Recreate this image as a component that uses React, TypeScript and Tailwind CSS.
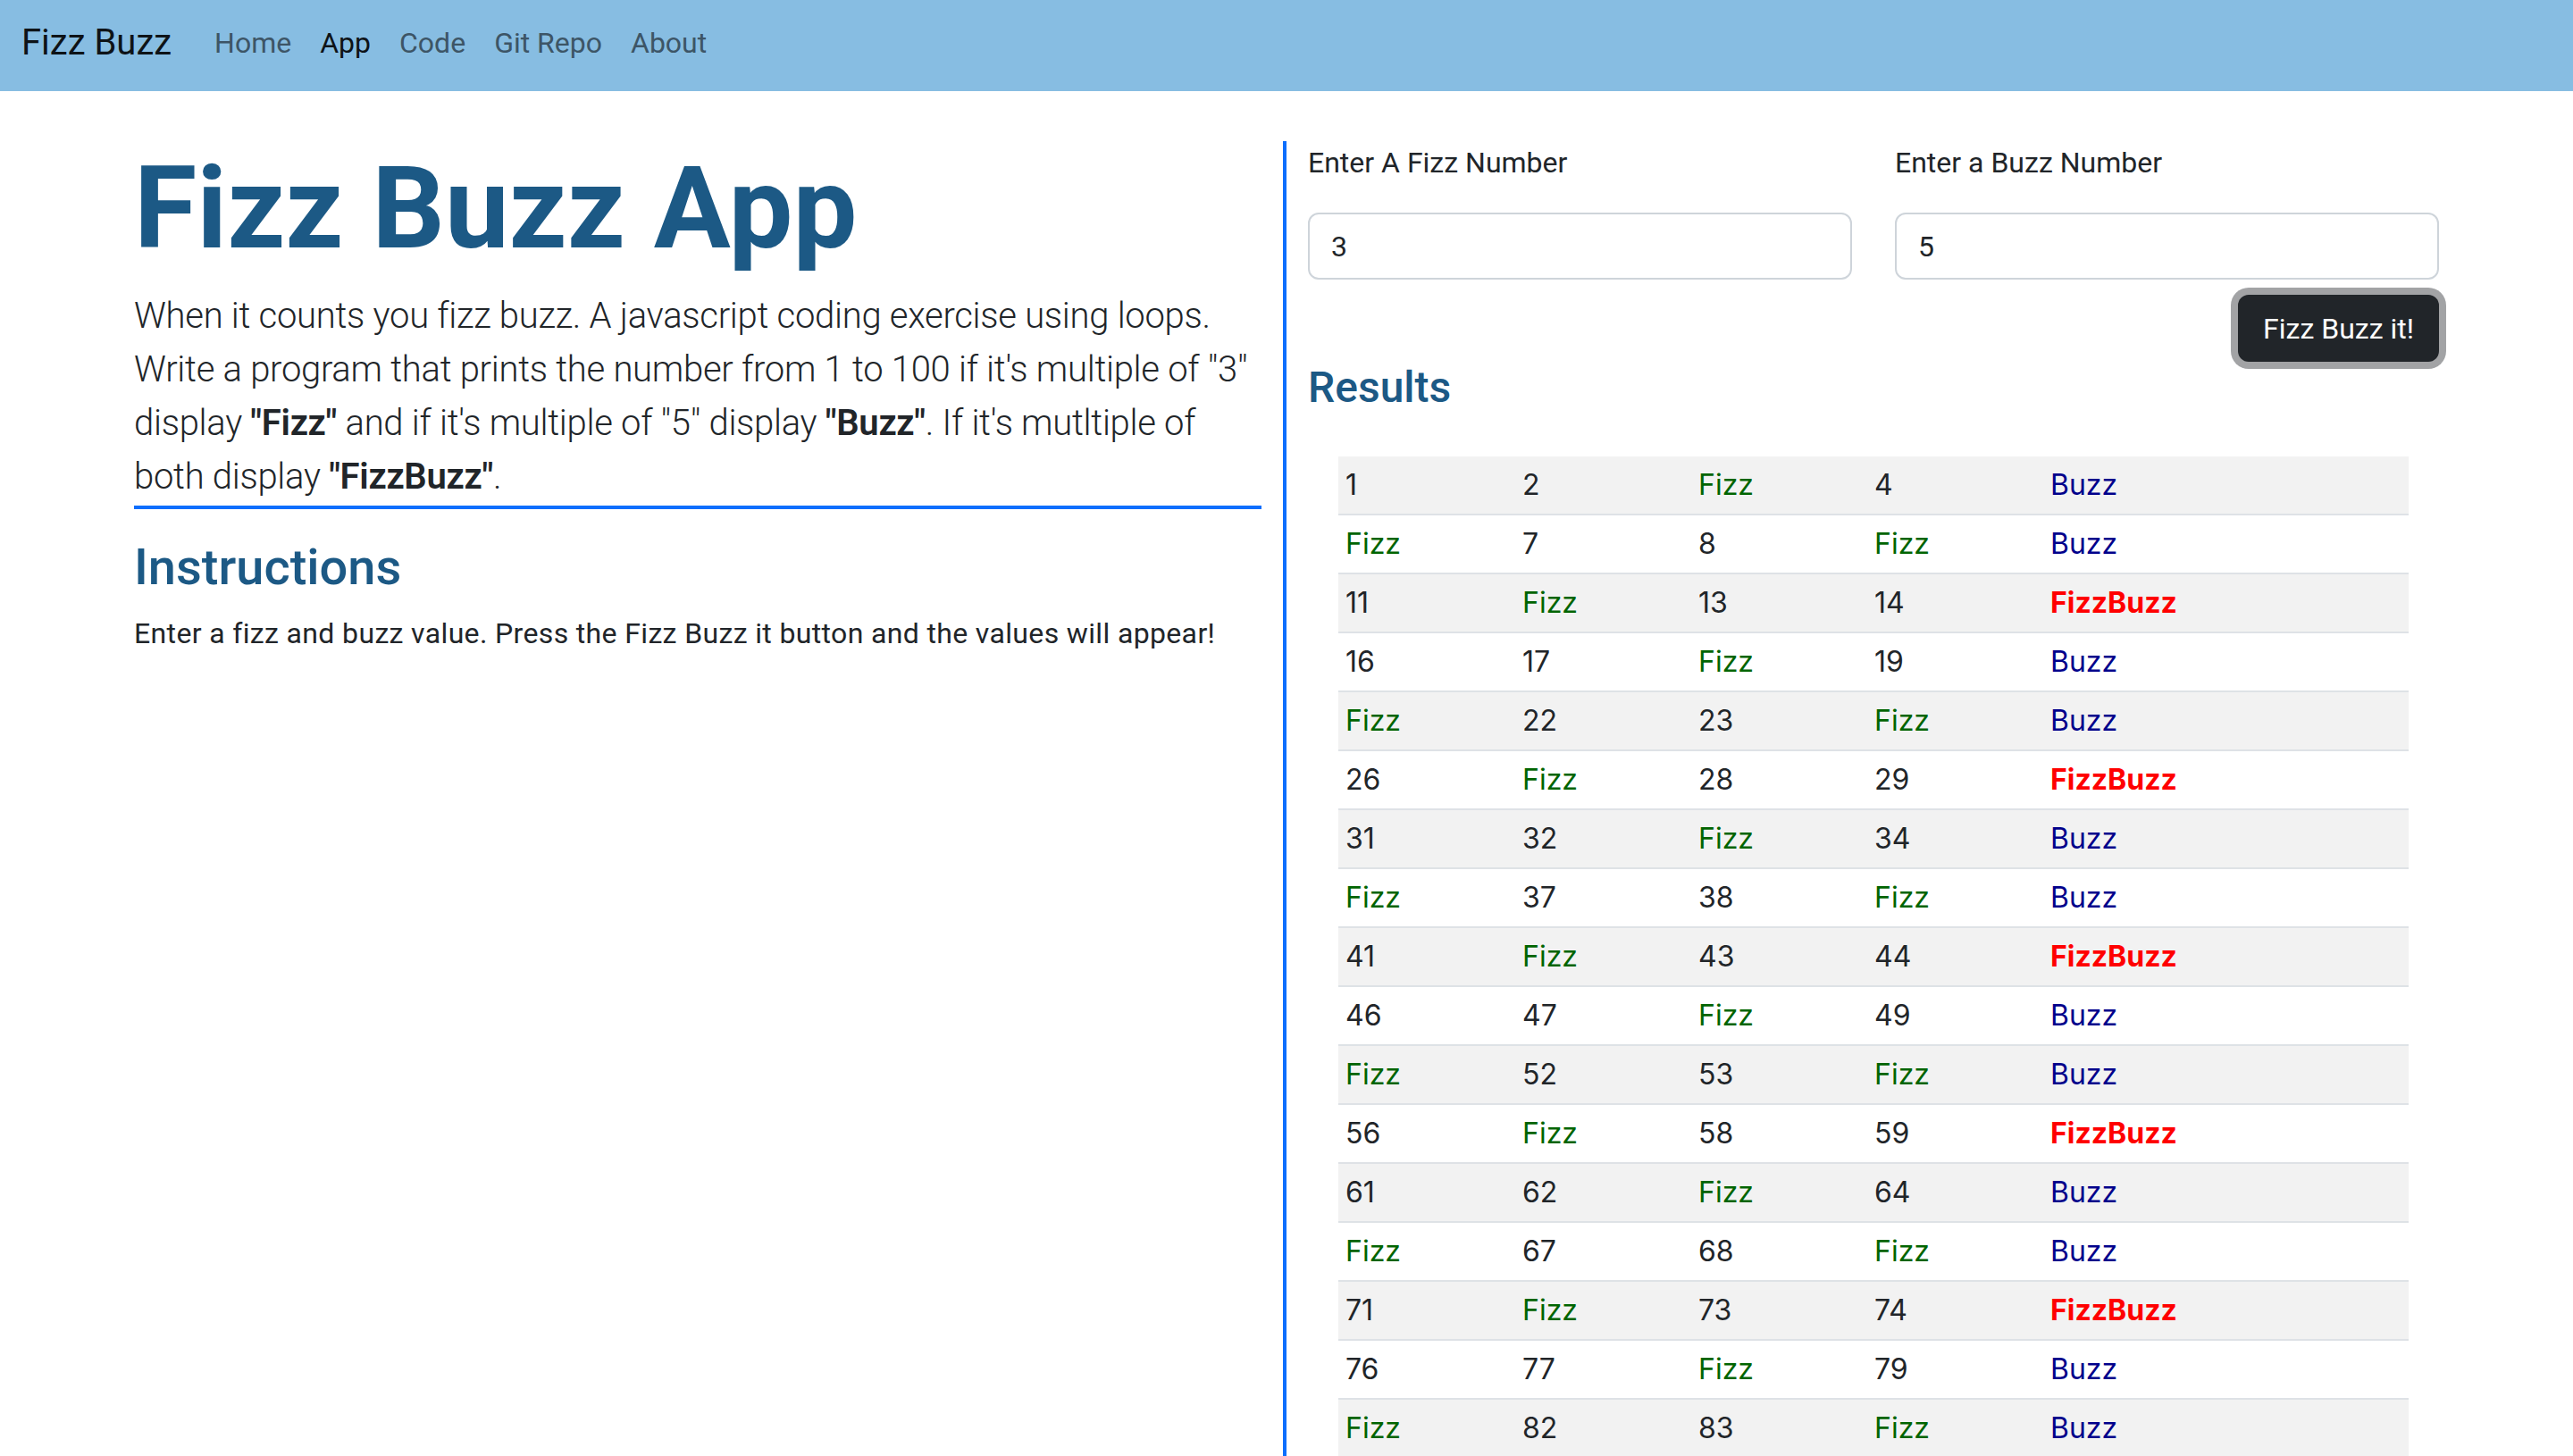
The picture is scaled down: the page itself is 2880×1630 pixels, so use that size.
import React from "react";

const fizz = 3;
const buzz = 5;

function fizzBuzzRows() {
    const values: { n: number; kind: string }[] = [];
    for (let i = 1; i <= 100; i++) {
        let kind = "num";
        if (i % fizz === 0 && i % buzz === 0) kind = "fizzbuzz";
        else if (i % fizz === 0) kind = "fizz";
        else if (i % buzz === 0) kind = "buzz";
        values.push({ n: i, kind });
    }
    const rows = [];
    for (let i = 0; i < values.length; i += 5) rows.push(values.slice(i, i + 5));
    return rows;
}

function Cell({ n, kind }: { n: number; kind: string }) {
    if (kind === "fizzbuzz") return <td className="px-[8px] py-[8px] font-bold text-[#ff0000]">FizzBuzz</td>;
    if (kind === "fizz") return <td className="px-[8px] py-[8px] text-[#006400]">Fizz</td>;
    if (kind === "buzz") return <td className="px-[8px] py-[8px] text-[#00008b]">Buzz</td>;
    return <td className="px-[8px] py-[8px]">{n}</td>;
}

export default function App() {
    const rows = fizzBuzzRows();
    return (
        <div className="h-screen overflow-hidden bg-white font-['Roboto',sans-serif] text-[#212529]">
            <nav className="flex h-[102px] items-center bg-[#87bde2] px-[24px] pb-[6px]">
                <a href="#" className="mr-[32px] text-[40px] leading-[60px] text-[#0e1317]">Fizz Buzz</a>
                <ul className="flex text-[32px] leading-[48px]">
                    <li><a href="#" className="px-[16px] text-[#3d5566]">Home</a></li>
                    <li><a href="#" className="px-[16px] text-[#0e1317]">App</a></li>
                    <li><a href="#" className="px-[16px] text-[#3d5566]">Code</a></li>
                    <li><a href="#" className="px-[16px] text-[#3d5566]">Git Repo</a></li>
                    <li><a href="#" className="px-[16px] text-[#3d5566]">About</a></li>
                </ul>
            </nav>
            <main className="flex px-[150px] pt-[56px]">
                <section className="w-[1290px] shrink-0 border-r-4 border-[#0d6efd] pr-[24px]">
                    <h1 className="mb-[16px] text-[128px] font-bold leading-[150px] text-[#1c5985]">Fizz Buzz App</h1>
                    <p className="whitespace-nowrap border-b-4 border-[#0d6efd] pb-[2px] text-[40px] font-light leading-[60px] tracking-[-0.007em]">
                        When it counts you fizz buzz. A javascript coding exercise using loops.<br />
                        Write a program that prints the number from 1 to 100 if it's multiple of "3"<br />
                        display <b className="font-semibold">"Fizz"</b> and if it's multiple of "5" display <b className="font-semibold">"Buzz"</b>. If it's mutltiple of<br />
                        both display <b className="font-semibold">"FizzBuzz"</b>.
                    </p>
                    <h3 className="mb-[16px] mt-[32px] text-[56px] font-medium leading-[1.2] text-[#1c5985]">Instructions</h3>
                    <p className="text-[32px] leading-[48px] tracking-[0.011em]">Enter a fizz and buzz value. Press the Fizz Buzz it button and the values will appear!</p>
                </section>
                <section className="flex-1 pl-[24px]">
                    <div className="grid grid-cols-2 gap-x-[48px]">
                        <div>
                            <label className="mb-[32px] block text-[32px] leading-[48px]">Enter A Fizz Number</label>
                            <input defaultValue="3" className="h-[75px] w-full rounded-[12px] border-2 border-[#ced4da] px-[24px] text-[32px] outline-none" />
                        </div>
                        <div>
                            <label className="mb-[32px] block text-[32px] leading-[48px]">Enter a Buzz Number</label>
                            <input defaultValue="5" className="h-[75px] w-full rounded-[12px] border-2 border-[#ced4da] px-[24px] text-[32px] outline-none" />
                        </div>
                    </div>
                    <div className="mt-[17px] flex justify-end">
                        <button className="h-[75px] w-[225px] rounded-[12px] bg-[#212529] text-[32px] text-white ring-8 ring-[#a2a3a5]">Fizz Buzz it!</button>
                    </div>
                    <h4 className="text-[48px] font-medium leading-[1.2] text-[#1c5985]">Results</h4>
                    <div className="mx-[34px] mt-[48px]">
                        <table className="w-full table-fixed border-collapse font-['Inter',sans-serif] text-[32px] leading-[48px]">
                            <colgroup>
                                <col className="w-[198px]" />
                                <col className="w-[197px]" />
                                <col className="w-[197px]" />
                                <col className="w-[197px]" />
                                <col />
                            </colgroup>
                            <tbody>
                                {rows.map((row, i) => (
                                    <tr key={i} className={i % 2 === 0 ? "border-b-2 border-[#dee2e6] bg-[#f2f2f2]" : "border-b-2 border-[#dee2e6]"}>
                                        {row.map((v) => <Cell key={v.n} n={v.n} kind={v.kind} />)}
                                    </tr>
                                ))}
                            </tbody>
                        </table>
                    </div>
                </section>
            </main>
        </div>
    );
}
